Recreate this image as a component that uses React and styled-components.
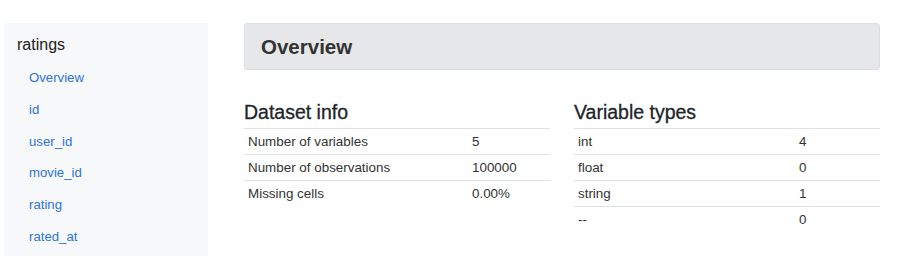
import React from 'react';
import styled, { createGlobalStyle } from 'styled-components';

const GlobalStyle = createGlobalStyle`
  body {
    margin: 0;
    background: #fff;
    font-family: 'Liberation Sans', Arial, sans-serif;
    color: #333;
  }
`;

const navItems = ['Overview', 'id', 'user_id', 'movie_id', 'rating', 'rated_at'];

const datasetInfo = [
  ['Number of variables', '5'],
  ['Number of observations', '100000'],
  ['Missing cells', '0.00%'],
];

const variableTypes = [
  ['int', '4'],
  ['float', '0'],
  ['string', '1'],
  ['--', '0'],
];

const InfoTable = ({ title, rows, labelWidth }) => (
  <Section>
    <SectionTitle>{title}</SectionTitle>
    <Table>
      {rows.map(([label, value]) => (
        <Row key={label} $labelWidth={labelWidth}>
          <Cell>{label}</Cell>
          <Cell>{value}</Cell>
        </Row>
      ))}
    </Table>
  </Section>
);

const App = () => {
  return (
    <Page>
      <GlobalStyle />
      <Sidebar>
        <SideTitle>ratings</SideTitle>
        <NavList>
          {navItems.map((item) => (
            <NavLink key={item} href="#">
              {item}
            </NavLink>
          ))}
        </NavList>
      </Sidebar>
      <Main>
        <PageHeader>
          <HeaderTitle>Overview</HeaderTitle>
        </PageHeader>
        <Columns>
          <InfoTable title="Dataset info" rows={datasetInfo} labelWidth={224} />
          <InfoTable title="Variable types" rows={variableTypes} labelWidth={221} />
        </Columns>
      </Main>
    </Page>
  );
};

export default App;

const Page = styled.div`
  display: flex;
  align-items: flex-start;
  padding: 23px 24px 0 4px;
  gap: 36px;
  height: 256px;
  box-sizing: border-box;
  overflow: hidden;
`;

const Sidebar = styled.nav`
  width: 204px;
  flex-shrink: 0;
  align-self: stretch;
  background-color: #f7f8fa;
  padding: 10px 0 0 13px;
  box-sizing: border-box;
`;

const SideTitle = styled.div`
  font-size: 16px;
  line-height: 24px;
  color: #222;
`;

const NavList = styled.div`
  display: flex;
  flex-direction: column;
  margin-top: 5px;
  padding-left: 12px;
`;

const NavLink = styled.a`
  display: block;
  height: 31.8px;
  line-height: 31.8px;
  font-size: 13.2px;
  color: #2f73d8;
  text-decoration: none;
`;

const Main = styled.div`
  flex: 1;
  display: flex;
  flex-direction: column;
`;

const PageHeader = styled.div`
  height: 47px;
  box-sizing: border-box;
  display: flex;
  align-items: center;
  padding-left: 16px;
  background-color: #e6e7e9;
  border: 1px solid #dddee0;
  border-radius: 3px;
`;

const HeaderTitle = styled.h1`
  margin: 0;
  font-size: 20.5px;
  font-weight: 700;
  color: #333;
`;

const Columns = styled.div`
  display: grid;
  grid-template-columns: 1fr 1fr;
  column-gap: 24px;
  margin-top: 30px;
`;

const Section = styled.div`
  display: flex;
  flex-direction: column;
`;

const SectionTitle = styled.h4`
  margin: 0 0 4px;
  font-size: 19.5px;
  line-height: 24px;
  font-weight: 500;
  color: #212529;
  -webkit-text-stroke: 0.3px #212529;
`;

const Table = styled.div`
  display: flex;
  flex-direction: column;
`;

const Row = styled.div`
  display: grid;
  grid-template-columns: ${(p) => p.$labelWidth}px 1fr;
  height: 26px;
  box-sizing: border-box;
  border-top: 1px solid #dee2e6;
  align-items: center;
`;

const Cell = styled.div`
  padding-left: 4px;
  font-size: 13.4px;
  color: #333;
`;
